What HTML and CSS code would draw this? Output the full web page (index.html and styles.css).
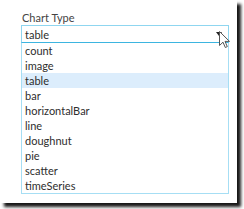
FILE: index.html
```html
<!DOCTYPE html>
<html>
<head>
<meta charset="utf-8">
<link rel="stylesheet" href="styles.css">
</head>
<body>
<div class="dialog">
  <div class="field">
    <div class="label">Chart Type</div>
    <div class="select">
      <span class="value">table</span>
      <svg class="arrow" width="6" height="4" viewBox="0 0 6 4"><path d="M0 0H6L3 4Z" fill="#222"/></svg>
    </div>
    <ul class="list">
      <li>count</li>
      <li>image</li>
      <li class="selected">table</li>
      <li>bar</li>
      <li>horizontalBar</li>
      <li>line</li>
      <li>doughnut</li>
      <li>pie</li>
      <li>scatter</li>
      <li>timeSeries</li>
    </ul>
  </div>
  <svg class="cursor" width="12" height="19" viewBox="0 0 12 19"><path d="M0.5 0.5V14.5L4 11.2L6.3 16.5L8.3 15.6L6 10.4H10.5Z" fill="#fff" stroke="#555" stroke-width="1" stroke-linejoin="round"/></svg>
</div>
</body>
</html>
```
FILE: styles.css
```css
html, body {
  margin: 0;
  padding: 0;
  background: #ffffff;
}
body {
  width: 244px;
  height: 209px;
  overflow: hidden;
  font-family: Lato, "Open Sans", sans-serif;
  color: #2e2e2e;
}
.dialog {
  position: relative;
  width: 237px;
  height: 203px;
  background: #ffffff;
  box-shadow: 4px 4px 3px rgba(0, 0, 0, 0.9);
  padding: 11px 0 0 21px;
  box-sizing: border-box;
}
.field {
  width: 208px;
}
.label {
  font-size: 11px;
  line-height: 14px;
  color: #444444;
  padding-left: 1px;
}
.select {
  height: 18px;
  box-sizing: border-box;
  border: 1px solid #8fd6f0;
  border-bottom: 1px solid #3db5e0;
  display: flex;
  align-items: center;
  justify-content: space-between;
  padding: 0 6px 0 3px;
  font-size: 11px;
}
.arrow {
  display: block;
}
.list {
  list-style: none;
  margin: 0;
  padding: 0;
  border: 1px solid #a6def4;
  border-top: none;
  font-size: 11px;
}
.list li {
  height: 15px;
  line-height: 15px;
  padding-left: 3px;
}
.list li.selected {
  background: #dcedfc;
}
.cursor {
  position: absolute;
  left: 219px;
  top: 31px;
}
```
